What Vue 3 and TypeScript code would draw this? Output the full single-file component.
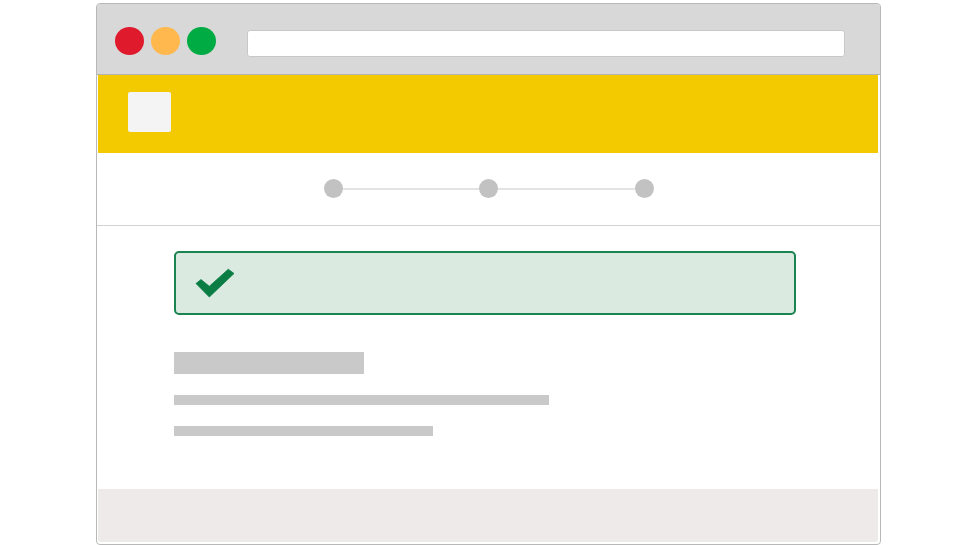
<script setup lang="ts">
const lights: string[] = ['red', 'amber', 'green']
const steps: number[] = [1, 2, 3]
</script>

<template>
  <div class="page">
    <div class="window">
      <header class="chrome">
        <span v-for="l in lights" :key="l" class="light" :class="l"></span>
        <div class="address"></div>
      </header>
      <div class="inner">
        <div class="brand"><div class="logo"></div></div>
        <div class="stepper">
          <template v-for="(s, i) in steps" :key="s">
            <span class="dot"></span>
            <span v-if="i < steps.length - 1" class="link"></span>
          </template>
        </div>
        <main class="content">
          <div class="alert">
            <svg class="check" width="40" height="31" viewBox="0 0 40 31">
              <path d="M1 15.5 6 11.5 14.3 18.3 33.3 1.2 39 5.5 14.3 29Z" fill="#0a7d45" stroke="#0a7d45" stroke-width="0.8" />
            </svg>
          </div>
          <div class="title"></div>
          <div class="line long"></div>
          <div class="line short"></div>
        </main>
        <footer class="footer"></footer>
      </div>
    </div>
  </div>
</template>

<style>
html, body { margin: 0; background: #fff; }
</style>

<style scoped>
.page {
  width: 970px;
  height: 545px;
  padding: 3px 0 0 96px;
  box-sizing: border-box;
  overflow: hidden;
  background: #fff;
}
.window {
  width: 785px;
  height: 542px;
  box-sizing: border-box;
  border: 1px solid #b8b8b8;
  border-radius: 4px;
  display: flex;
  flex-direction: column;
  overflow: hidden;
}
.chrome {
  height: 71px;
  flex: none;
  box-sizing: border-box;
  background: #d8d8d8;
  border-bottom: 1px solid #b4b4b4;
  display: flex;
  align-items: center;
  padding-left: 18px;
  gap: 7px;
}
.light {
  width: 29px;
  height: 28px;
  border-radius: 50%;
  margin-top: 3px;
}
.red { background: #e01a2d; }
.amber { background: #ffb84d; }
.green { background: #00ab44; }
.address {
  width: 598px;
  height: 27px;
  box-sizing: border-box;
  margin: 9px 0 0 24px;
  background: #fff;
  border: 1px solid #c8c8c8;
  border-radius: 3px;
}
.inner {
  flex: 1;
  display: flex;
  flex-direction: column;
  padding: 0 2px 2px 1px;
  min-height: 0;
}
.brand {
  height: 77.5px;
  flex: none;
  background: #f3c900;
  padding: 17px 0 0 29.5px;
  box-sizing: border-box;
}
.logo {
  width: 43.5px;
  height: 40px;
  background: #f4f4f4;
  border-radius: 2px;
}
.stepper {
  height: 73.5px;
  flex: none;
  box-sizing: border-box;
  margin: 0 -2px 0 -1px;
  border-bottom: 1px solid #d2d2d2;
  display: flex;
  align-items: center;
  padding: 0 0 0 227px;
}
.dot {
  width: 19px;
  height: 19px;
  flex: none;
  border-radius: 50%;
  background: #c2c2c2;
}
.link {
  width: 136.4px;
  height: 2px;
  flex: none;
  background: #e3e3e3;
}
.content {
  flex: 1;
  padding: 25px 0 0 76px;
  min-height: 0;
}
.alert {
  width: 622px;
  height: 64px;
  box-sizing: border-box;
  border: 2px solid #1a8450;
  border-radius: 5px;
  background: #dbeae1;
  display: flex;
  align-items: center;
  padding-left: 19px;
}
.check { display: block; }
.title {
  width: 190px;
  height: 22px;
  margin-top: 37px;
  background: #c9c9c9;
}
.line {
  height: 10px;
  background: #c9c9c9;
}
.long { width: 375px; margin-top: 21px; }
.short { width: 259px; margin-top: 21px; }
.footer {
  height: 53px;
  flex: none;
  background: #eeeaea;
  border-radius: 0 0 3px 3px;
}
</style>
